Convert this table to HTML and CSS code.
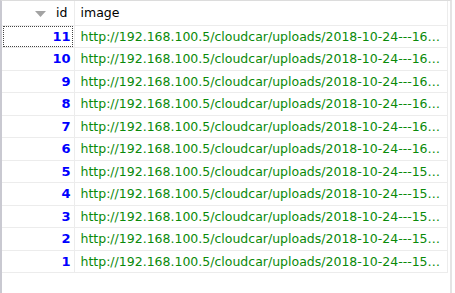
FILE: index.html
```html
<!DOCTYPE html>
<html lang="en">
<head>
    <meta charset="UTF-8">
    <title>uploads</title>
    <link rel="stylesheet" href="styles.css">
</head>
<body>
    <div class="grid-wrap">
        <table class="result-grid">
            <thead>
                <tr>
                    <th class="col-id">
                        <svg class="sort-icon" width="11" height="6" viewBox="0 0 11 6"><path d="M0 0H11L5.5 6Z" fill="#a3a3a3"/></svg>
                        id
                    </th>
                    <th class="col-image">image</th>
                </tr>
            </thead>
            <tbody>
                <tr><td class="id focused">11</td><td class="url">http://192.168.100.5/cloudcar/uploads/2018-10-24---16…</td></tr>
                <tr><td class="id">10</td><td class="url">http://192.168.100.5/cloudcar/uploads/2018-10-24---16…</td></tr>
                <tr><td class="id">9</td><td class="url">http://192.168.100.5/cloudcar/uploads/2018-10-24---16…</td></tr>
                <tr><td class="id">8</td><td class="url">http://192.168.100.5/cloudcar/uploads/2018-10-24---16…</td></tr>
                <tr><td class="id">7</td><td class="url">http://192.168.100.5/cloudcar/uploads/2018-10-24---16…</td></tr>
                <tr><td class="id">6</td><td class="url">http://192.168.100.5/cloudcar/uploads/2018-10-24---16…</td></tr>
                <tr><td class="id">5</td><td class="url">http://192.168.100.5/cloudcar/uploads/2018-10-24---15…</td></tr>
                <tr><td class="id">4</td><td class="url">http://192.168.100.5/cloudcar/uploads/2018-10-24---15…</td></tr>
                <tr><td class="id">3</td><td class="url">http://192.168.100.5/cloudcar/uploads/2018-10-24---15…</td></tr>
                <tr><td class="id">2</td><td class="url">http://192.168.100.5/cloudcar/uploads/2018-10-24---15…</td></tr>
                <tr><td class="id">1</td><td class="url">http://192.168.100.5/cloudcar/uploads/2018-10-24---15…</td></tr>
            </tbody>
        </table>
    </div>
</body>
</html>
```

FILE: styles.css
```css
* {
    margin: 0;
    padding: 0;
    box-sizing: border-box;
    font-family: "DejaVu Sans", Tahoma, sans-serif;
}

body {
    width: 455px;
    height: 293px;
    background: #fff;
    overflow: hidden;
}

.grid-wrap {
    width: 452px;
    height: 293px;
    border-left: 2px solid #c9c9d1;
    border-top: 1px solid #dcdcdc;
    border-right: 2px solid #e4e4e4;
}

.result-grid {
    width: 446px;
    border-collapse: collapse;
    table-layout: fixed;
}

.result-grid th,
.result-grid td {
    border-right: 1px solid #ececec;
    border-bottom: 1px solid #ececec;
    white-space: nowrap;
    overflow: hidden;
    font-size: 12.5px;
}

.result-grid th {
    height: 24px;
    font-weight: normal;
    color: #000;
    text-align: left;
}

.result-grid td {
    height: 22.5px;
}

.col-id {
    width: 72px;
    text-align: right !important;
    padding-right: 6px;
}

.col-image {
    padding-left: 6px;
}

.sort-icon {
    vertical-align: middle;
    margin-right: 6px;
}

.id {
    text-align: right;
    padding-right: 3px;
    color: #0000ff;
    font-weight: bold;
    font-size: 13px !important;
}

.focused {
    outline: 1px dotted #444;
    outline-offset: -2px;
}

.url {
    padding-left: 6px;
    color: #0a8a0a;
}
```
